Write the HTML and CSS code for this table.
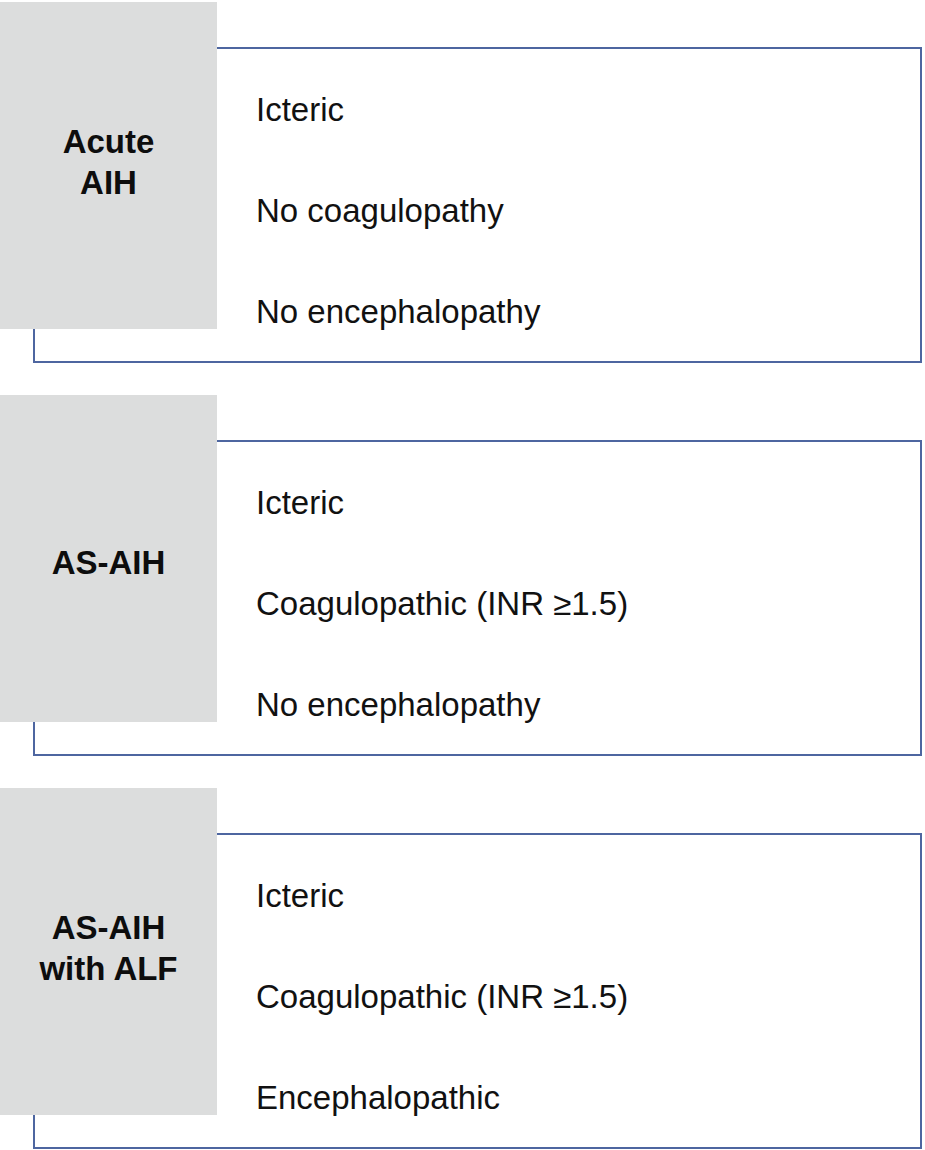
FILE: index.html
```html
<!DOCTYPE html>
<html lang="en">
<head>
<meta charset="utf-8">
<title>AIH presentations</title>
<link rel="stylesheet" href="styles.css">
</head>
<body>
<div class="stack">
  <section class="panel">
    <div class="label">Acute<br>AIH</div>
    <div class="box">
      <div class="item">Icteric</div>
      <div class="item">No coagulopathy</div>
      <div class="item">No encephalopathy</div>
    </div>
  </section>
  <section class="panel">
    <div class="label single">AS-AIH</div>
    <div class="box">
      <div class="item">Icteric</div>
      <div class="item">Coagulopathic (INR ≥1.5)</div>
      <div class="item">No encephalopathy</div>
    </div>
  </section>
  <section class="panel">
    <div class="label">AS-AIH<br>with ALF</div>
    <div class="box">
      <div class="item">Icteric</div>
      <div class="item">Coagulopathic (INR ≥1.5)</div>
      <div class="item">Encephalopathic</div>
    </div>
  </section>
</div>
</body>
</html>
```
FILE: styles.css
```css
html, body {
  margin: 0;
  padding: 0;
  background: #ffffff;
}
body {
  font-family: "Liberation Sans", Arial, sans-serif;
  color: #111111;
}
.stack {
  display: flex;
  flex-direction: column;
  gap: 32px;
  padding-top: 2px;
}
.panel {
  display: grid;
  grid-template-columns: 33px 184px 705px;
  grid-template-rows: 45px 282px 34px;
}
.label {
  grid-column: 1 / 3;
  grid-row: 1 / 3;
  z-index: 1;
  background: #dcdddd;
  display: flex;
  align-items: center;
  justify-content: center;
  text-align: center;
  font-weight: bold;
  font-size: 33px;
  line-height: 41px;
  color: #0d0d0d;
  padding-bottom: 7px;
  box-sizing: border-box;
}
.label.single {
  padding-bottom: 0;
  padding-top: 8px;
}
.box {
  grid-column: 2 / 4;
  grid-row: 2 / 4;
  border: 2px solid #4e66a0;
  display: flex;
  flex-direction: column;
  gap: 63px;
  padding: 42px 0 0 221px;
  box-sizing: border-box;
}
.item {
  font-size: 33px;
  line-height: 38px;
  height: 38px;
  white-space: nowrap;
}
```
